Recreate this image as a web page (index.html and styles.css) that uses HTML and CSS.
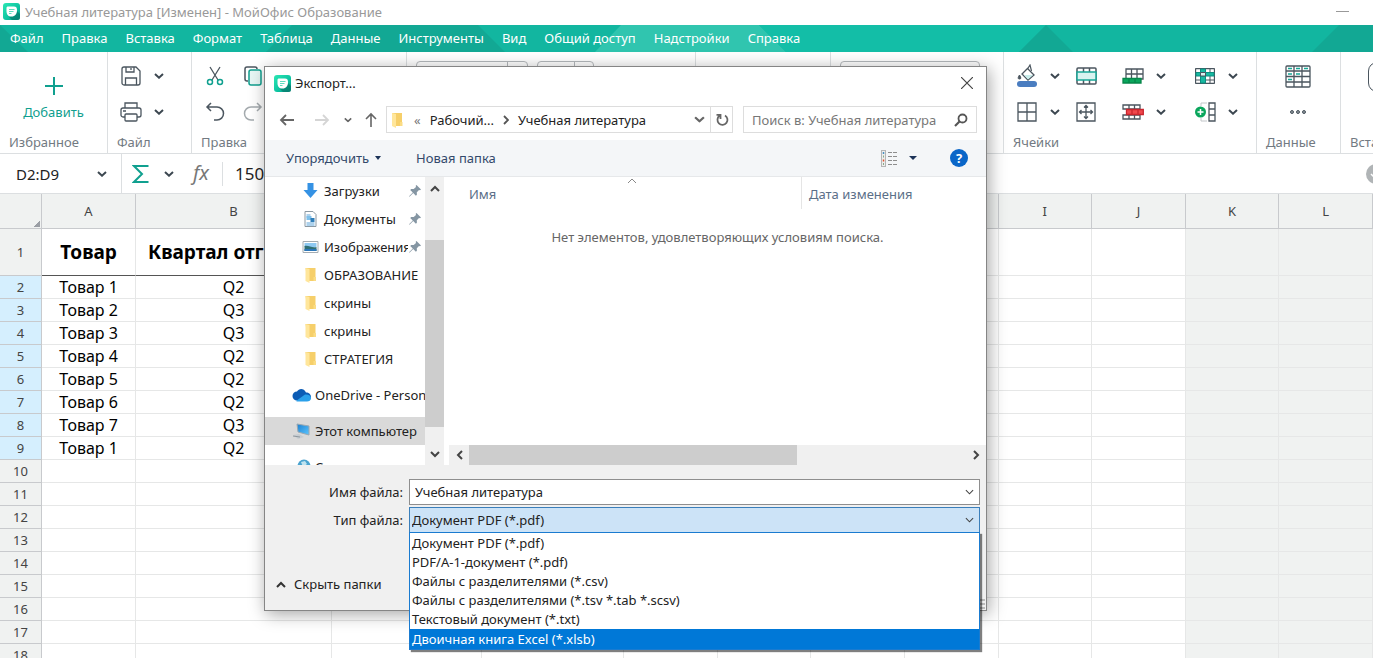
FILE: index.html
```html
<!DOCTYPE html>
<html lang="ru">
<head>
<meta charset="utf-8">
<title>Учебная литература [Изменен] - МойОфис Образование</title>
<link rel="stylesheet" href="styles.css">
</head>
<body>
<svg class="defs" width="0" height="0" aria-hidden="true">
  <defs>
    <linearGradient id="logo-fill" x1="0" y1="0" x2="1" y2="1">
      <stop offset="0" stop-color="#2be8b4"/><stop offset="0.6" stop-color="#0cc2a0"/><stop offset="1" stop-color="#0a8f80"/>
    </linearGradient>
    <linearGradient id="screen-fill" x1="0" y1="0" x2="1" y2="1">
      <stop offset="0" stop-color="#1c7fd0"/><stop offset="1" stop-color="#5cc6ff"/>
    </linearGradient>
  </defs>
  <symbol id="logo" viewBox="0 0 17 17">
    <rect width="17" height="17" rx="3" fill="url(#logo-fill)"/>
    <path d="M13 7l4 4v4a2 2 0 0 1-2 2H9l-3-3z" fill="#067a6c" opacity=".7"/>
    <path d="M3.500 5C3.500 4 4 3.500 5 3.500h6c2 0 3 1 3 3.500 0 4-2 6.500-5.500 6.500S3.500 11.500 3.500 8z" fill="#fff"/>
    <path d="M6 6.500h5.500M6 8.500h4.500M6 10.500h2.500" stroke="#5fdcbf" stroke-width="1"/>
  </symbol>
  <symbol id="chev" viewBox="0 0 10 6"><path d="M1 1l4 3.700L9 1" fill="none" stroke="currentColor" stroke-width="2"/></symbol>
  <symbol id="chev-thin" viewBox="0 0 10 6"><path d="M1 1l4 4 4-4" fill="none" stroke="currentColor" stroke-width="1.200"/></symbol>
  <symbol id="folder" viewBox="0 0 12 16">
    <path d="M1 1h10v13H3z" fill="#f6cf6a"/><path d="M1 1l4 1v14l-4-2z" fill="#ffe69b"/><path d="M9 10h2.500v4H9z" fill="#fbdc84"/>
  </symbol>
  <symbol id="pin" viewBox="0 0 12 12"><path d="M7.500 0 12 4.500l-1 .8-1-.2-2.200 2.200.1 2.400-1 1-2.700-2.700L.5 11.700l-.4-.4L3.800 7.600 1.200 5l1-1 2.500.1L7 1.900 6.700.8z" fill="#8596a3"/></symbol>
</svg>

<header class="titlebar">
  <svg class="logo"><use href="#logo"/></svg>
  <h1 class="title">Учебная литература [Изменен] - МойОфис Образование</h1>
  <button class="minimize" type="button" aria-label="Свернуть"></button>
</header>

<nav class="menubar">
  <svg class="pattern" viewBox="0 0 1373 27" preserveAspectRatio="none" aria-hidden="true">
    <path d="M0 0v27h28z" fill="#12a894"/>
    <path d="M292 0h186l27 27H266z" fill="#12a894"/>
    <path d="M621 0h138l27 27H595z" fill="#30c5af"/>
    <path d="M759 0h287l-27 27H786z" fill="#13bea7"/>
    <path d="M1046 0l27 27h-54z" fill="#12a894"/>
    <path d="M1339 0h34v27h-61z" fill="#12a894"/>
  </svg>
  <button type="button">Файл</button><button type="button">Правка</button><button type="button">Вставка</button><button type="button">Формат</button><button type="button">Таблица</button><button type="button">Данные</button><button type="button">Инструменты</button><button type="button">Вид</button><button type="button">Общий доступ</button><button type="button">Надстройки</button><button type="button">Справка</button>
</nav>

<section class="ribbon">
  <div class="group favorites">
    <button class="add" type="button">
      <svg width="20" height="20" viewBox="0 0 20 20"><path d="M10 1v18M1 10h18" stroke="#10a08f" stroke-width="2"/></svg>
      Добавить
    </button>
    <h2>Избранное</h2>
  </div>
  <div class="group file">
    <div class="tools">
      <div class="grid two">
        <button type="button" aria-label="Сохранить"><svg width="20" height="20" viewBox="0 0 20 20" fill="none" stroke="#4b565f" stroke-width="1.300"><path d="M1 3a2 2 0 0 1 2-2h12l4 4v12a2 2 0 0 1-2 2H3a2 2 0 0 1-2-2zM5 1v5h8V1M10 2v2M4.500 19v-7h11v7"/></svg></button>
        <button type="button" aria-label="Варианты сохранения"><svg class="chev"><use href="#chev"/></svg></button>
        <button type="button" aria-label="Печать"><svg width="22" height="20" viewBox="0 0 22 20" fill="none" stroke="#4b565f" stroke-width="1.300"><path d="M5 6V1h12v5M5 15H3a2 2 0 0 1-2-2V8a2 2 0 0 1 2-2h16a2 2 0 0 1 2 2v5a2 2 0 0 1-2 2h-2M3 9h3"/><rect x="5" y="12" width="12" height="7" rx="1"/></svg></button>
        <button type="button" aria-label="Варианты печати"><svg class="chev"><use href="#chev"/></svg></button>
      </div>
    </div>
    <h2>Файл</h2>
  </div>
  <div class="group edit">
    <div class="tools">
      <div class="grid spaced">
        <button type="button" aria-label="Вырезать"><svg width="18" height="20" viewBox="0 0 18 20" fill="none"><path d="M4 1l8 13M14 1 6 14" stroke="#4b565f" stroke-width="1.300"/><circle cx="4" cy="16" r="2.500" stroke="#10a08f" stroke-width="1.500"/><circle cx="14" cy="16" r="2.500" stroke="#10a08f" stroke-width="1.500"/></svg></button>
        <button type="button" aria-label="Копировать"><svg width="18" height="20" viewBox="0 0 18 20" fill="none" stroke-width="1.500"><path d="M4 15H3a2 2 0 0 1-2-2V3a2 2 0 0 1 2-2h8a2 2 0 0 1 2 2" stroke="#4b565f"/><rect x="5" y="4" width="12" height="15" rx="2" fill="#e8f7f5" stroke="#10a08f"/></svg></button>
        <button type="button" aria-label="Отменить"><svg width="20" height="20" viewBox="0 0 20 20" fill="none" stroke="#4b565f" stroke-width="1.500"><path d="M6 1 2 5l4 4M2 5h10a6.500 6.500 0 0 1 0 13H9"/></svg></button>
        <button type="button" aria-label="Повторить"><svg width="20" height="20" viewBox="0 0 20 20" fill="none" stroke="#a4aaae" stroke-width="1.500"><path d="M14 1l4 4-4 4M18 5H8a6.500 6.500 0 0 0 0 13h3"/></svg></button>
      </div>
    </div>
    <h2>Правка</h2>
  </div>
  <div class="group font"><span class="field wide"></span><span class="field small"></span></div>
  <div class="group align"></div>
  <div class="group number"><span class="field style"></span></div>
  <div class="group cells">
    <div class="tools">
      <div class="grid three">
        <button type="button" aria-label="Заливка"><svg width="22" height="24" viewBox="0 0 22 24" fill="none"><path d="M11.500 4.500 18 11l-6 5-6-6z" fill="#fff" stroke="#4b565f" stroke-width="1.300"/><path d="M8 11h9l-5 4.500z" fill="#c9eeec"/><path d="M11.500 5 14 1l1.500 6" stroke="#4b565f" stroke-width="1.200"/><path d="M3.500 11c-2 3-1.500 4 0 4s2-1 0-4z" fill="#4b565f" stroke="#4b565f"/><rect x="1" y="17" width="20" height="6" rx="3" fill="#4a7dc0"/></svg></button>
        <button type="button" aria-label="Цвет заливки"><svg class="chev"><use href="#chev"/></svg></button>
        <button type="button" aria-label="Объединить"><svg width="21" height="18" viewBox="0 0 21 18" fill="none" stroke="#4b565f" stroke-width="1.500"><rect x="1" y="1" width="19" height="16" rx="1"/><path d="M7.500 1v4M13.500 1v4M7.500 13v4M13.500 13v4"/><rect x="1" y="5" width="19" height="8" fill="#d9f3f0" stroke="#19a797"/></svg></button>
        <button type="button" aria-label="Границы"><svg width="20" height="20" viewBox="0 0 20 20" fill="none" stroke="#4b565f" stroke-width="1.300"><path d="M1 1h18v18H1zM10 1v18M1 10h18"/></svg></button>
        <button type="button" aria-label="Вид границ"><svg class="chev"><use href="#chev"/></svg></button>
        <button type="button" aria-label="Размер"><svg width="20" height="20" viewBox="0 0 20 20" fill="none" stroke="#4b565f" stroke-width="1.300"><path d="M1 1h18v18H1zM10 3.500v13M3.500 10h13M8 5.500l2-2 2 2M8 14.500l2 2 2-2M5.500 8l-2 2 2 2M14.500 8l2 2-2 2"/></svg></button>
      </div>
      <span class="sep"></span>
      <div class="grid two">
        <button type="button" aria-label="Вставить строки"><svg width="22" height="16" viewBox="0 0 22 16" fill="none" stroke="#4b565f" stroke-width="1.300"><path d="M4 1h17v10H4zM9.500 1v10M15 1v10M4 6h17"/><path d="M1 10.500h18V15H1zM7 10.500V15M13 10.500V15" fill="#0aa65c" stroke="#07864a"/></svg></button>
        <button type="button" aria-label="Варианты вставки строк"><svg class="chev"><use href="#chev"/></svg></button>
        <button type="button" aria-label="Удалить строки"><svg width="22" height="16" viewBox="0 0 22 16" fill="none" stroke="#4b565f" stroke-width="1.300"><path d="M1 1h17v4H1zM7 1v4M12.500 1v4M1 11h17v4H1zM7 11v4M12.500 11v4"/><path d="M4.500 5.500H21.300v5H4.500zM10 5.500v5M16 5.500v5" fill="#f0484c" stroke="#c9262f"/></svg></button>
        <button type="button" aria-label="Варианты удаления строк"><svg class="chev"><use href="#chev"/></svg></button>
      </div>
      <span class="sep"></span>
      <div class="grid two">
        <button type="button" aria-label="Закрепить"><svg width="20" height="16" viewBox="0 0 20 16" fill="none" stroke="#4b565f"><rect x=".5" y=".5" width="19" height="15" rx="1" stroke-width="1.300"/><path d="M15 1v14M1 12h18"/><path d="M5.500 1h5v14h-5zM1 4.500h18V8H1z" fill="#17b8a0" stroke="#0c8f80"/><path d="M5.500 4.500h5V8h-5z" fill="#d9f3f0" stroke="#4b565f"/></svg></button>
        <button type="button" aria-label="Варианты закрепления"><svg class="chev"><use href="#chev"/></svg></button>
        <button type="button" aria-label="Добавить столбец"><svg width="21" height="20" viewBox="0 0 21 20" fill="none"><path d="M6 4V1h6M6 16v3h6" stroke="#c2c6c9"/><path d="M14 1h6v18h-6zM14 7h6M14 13h6" stroke="#4b565f" stroke-width="1.300"/><circle cx="5.500" cy="10" r="5.500" fill="#0aa65c"/><path d="M5.500 7v6M2.500 10h6" stroke="#fff" stroke-width="1.500"/></svg></button>
        <button type="button" aria-label="Варианты столбца"><svg class="chev"><use href="#chev"/></svg></button>
      </div>
    </div>
    <h2>Ячейки</h2>
  </div>
  <div class="group data">
    <div class="tools">
      <div class="grid one">
        <button type="button" aria-label="Сводная таблица"><svg width="26" height="23" viewBox="0 0 26 23" fill="none" stroke="#4b565f" stroke-width="1.300"><rect x="1" y="1" width="24" height="21" rx="1"/><path d="M9 1v21M17 1v21M1 6h24M1 11.500h24M1 17h24"/><path d="M3 3.500h4M11 3.500h4M19 3.500h4M3 9h4M11 9h4M3 14.500h4" stroke="#17a896" stroke-width="1.500"/></svg></button>
        <button type="button" aria-label="Ещё"><svg width="18" height="6" viewBox="0 0 18 6" fill="#8d959b" stroke="#4b565f"><circle cx="3" cy="3" r="1.500"/><circle cx="9" cy="3" r="1.500"/><circle cx="15" cy="3" r="1.500"/></svg></button>
      </div>
    </div>
    <h2>Данные</h2>
  </div>
  <div class="group insert">
    <div class="tools"><button type="button" class="shape" aria-label="Фигура"></button></div>
    <h2>Вставка</h2>
  </div>
</section>

<section class="formula">
  <button class="range" type="button">D2:D9 <svg class="chev"><use href="#chev"/></svg></button>
  <button class="sum" type="button" aria-label="Сумма"><svg width="17" height="20" viewBox="0 0 17 20" fill="none" stroke="#10a08f" stroke-width="2"><path d="M16.500 2H2l8 8-8 8h14.500"/></svg><svg class="chev"><use href="#chev"/></svg></button>
  <span class="fx">fx</span>
  <input class="value" aria-label="Формула" value="150">
  <button class="accept" type="button" aria-label="Принять"><svg width="20" height="20" viewBox="0 0 20 20"><circle cx="10" cy="10" r="10" fill="#b0b4b6"/><path d="M5 10l3.500 3.500L15 7" stroke="#fff" stroke-width="1.500" fill="none"/></svg></button>
</section>

<main class="sheet">
  <table>
    <colgroup><col class="c-num"><col class="c-a"><col class="c-b"><col class="c-c"><col class="c-d"><col class="c-std"><col class="c-std"><col class="c-std"><col class="c-std"><col class="c-std"><col class="c-std"><col class="c-std"><col class="c-std"></colgroup>
    <thead>
      <tr><th class="corner"></th><th>A</th><th>B</th><th>C</th><th>D</th><th>E</th><th>F</th><th>G</th><th>H</th><th>I</th><th>J</th><th>K</th><th>L</th></tr>
    </thead>
    <tbody>
      <tr class="head"><th>1</th><td>Товар</td><td>Квартал отг</td><td></td><td></td><td></td><td></td><td></td><td></td><td></td><td></td><td></td><td></td></tr>
      <tr class="sel"><th>2</th><td>Товар 1</td><td>Q2</td><td></td><td></td><td></td><td></td><td></td><td></td><td></td><td></td><td></td><td></td></tr>
      <tr class="sel"><th>3</th><td>Товар 2</td><td>Q3</td><td></td><td></td><td></td><td></td><td></td><td></td><td></td><td></td><td></td><td></td></tr>
      <tr class="sel"><th>4</th><td>Товар 3</td><td>Q3</td><td></td><td></td><td></td><td></td><td></td><td></td><td></td><td></td><td></td><td></td></tr>
      <tr class="sel"><th>5</th><td>Товар 4</td><td>Q2</td><td></td><td></td><td></td><td></td><td></td><td></td><td></td><td></td><td></td><td></td></tr>
      <tr class="sel"><th>6</th><td>Товар 5</td><td>Q2</td><td></td><td></td><td></td><td></td><td></td><td></td><td></td><td></td><td></td><td></td></tr>
      <tr class="sel"><th>7</th><td>Товар 6</td><td>Q2</td><td></td><td></td><td></td><td></td><td></td><td></td><td></td><td></td><td></td><td></td></tr>
      <tr class="sel"><th>8</th><td>Товар 7</td><td>Q3</td><td></td><td></td><td></td><td></td><td></td><td></td><td></td><td></td><td></td><td></td></tr>
      <tr class="sel"><th>9</th><td>Товар 1</td><td>Q2</td><td></td><td></td><td></td><td></td><td></td><td></td><td></td><td></td><td></td><td></td></tr>
      <tr><th>10</th><td></td><td></td><td></td><td></td><td></td><td></td><td></td><td></td><td></td><td></td><td></td><td></td></tr>
      <tr><th>11</th><td></td><td></td><td></td><td></td><td></td><td></td><td></td><td></td><td></td><td></td><td></td><td></td></tr>
      <tr><th>12</th><td></td><td></td><td></td><td></td><td></td><td></td><td></td><td></td><td></td><td></td><td></td><td></td></tr>
      <tr><th>13</th><td></td><td></td><td></td><td></td><td></td><td></td><td></td><td></td><td></td><td></td><td></td><td></td></tr>
      <tr><th>14</th><td></td><td></td><td></td><td></td><td></td><td></td><td></td><td></td><td></td><td></td><td></td><td></td></tr>
      <tr><th>15</th><td></td><td></td><td></td><td></td><td></td><td></td><td></td><td></td><td></td><td></td><td></td><td></td></tr>
      <tr><th>16</th><td></td><td></td><td></td><td></td><td></td><td></td><td></td><td></td><td></td><td></td><td></td><td></td></tr>
      <tr><th>17</th><td></td><td></td><td></td><td></td><td></td><td></td><td></td><td></td><td></td><td></td><td></td><td></td></tr>
      <tr><th>18</th><td></td><td></td><td></td><td></td><td></td><td></td><td></td><td></td><td></td><td></td><td></td><td></td></tr>
    </tbody>
  </table>
</main>

<div class="dialog" role="dialog" aria-labelledby="dialog-title">
  <div class="dialog-head">
    <svg class="logo"><use href="#logo"/></svg>
    <h2 id="dialog-title">Экспорт...</h2>
    <button type="button" aria-label="Закрыть"><svg width="12" height="12" viewBox="0 0 12 12"><path d="M0 0l12 12M12 0 0 12" stroke="#444" stroke-width="1.200"/></svg></button>
  </div>

  <div class="path-row">
    <button class="back" type="button" aria-label="Назад"><svg width="16" height="12" viewBox="0 0 16 12" fill="none" stroke="#666" stroke-width="1.800"><path d="M15 6H2M7 1 2 6l5 5"/></svg></button>
    <button class="forward" type="button" aria-label="Вперёд"><svg width="16" height="12" viewBox="0 0 16 12" fill="none" stroke="#d5d5d5" stroke-width="1.800"><path d="M1 6h13M9 1l5 5-5 5"/></svg></button>
    <button class="recent" type="button" aria-label="Последние"><svg width="8" height="6" viewBox="0 0 10 6" color="#666"><use href="#chev"/></svg></button>
    <button class="up" type="button" aria-label="Вверх"><svg width="12" height="16" viewBox="0 0 12 16" fill="none" stroke="#666" stroke-width="1.600"><path d="M6 15V2M1 7l5-5 5 5"/></svg></button>
    <div class="path">
      <svg class="folder"><use href="#folder"/></svg>
      <span class="dots">«</span>
      <span class="crumb">Рабочий...</span>
      <svg class="next" width="6" height="10" viewBox="0 0 6 10"><path d="M1 1l4 4-4 4" fill="none" stroke="#555" stroke-width="1.800"/></svg>
      <span class="crumb">Учебная литература</span>
      <button class="history" type="button" aria-label="История"><svg width="11" height="7" viewBox="0 0 10 6" color="#666"><use href="#chev"/></svg></button>
      <button class="refresh" type="button" aria-label="Обновить"><svg width="14" height="14" viewBox="0 0 14 14" fill="none" stroke="#666" stroke-width="1.800"><path d="M10 2.500a5 5 0 1 1-5.500.3M1.500 1.800h4V6"/></svg></button>
    </div>
    <label class="search"><input type="search" placeholder="Поиск в: Учебная литература" aria-label="Поиск"><svg width="14" height="14" viewBox="0 0 14 14" fill="none" stroke="#555"><circle cx="8.500" cy="5.500" r="4" stroke-width="1.800"/><path d="M5.500 8.500 1 13" stroke-width="2.200"/></svg></label>
  </div>

  <div class="commands">
    <button class="arrange" type="button">Упорядочить <i class="caret"></i></button>
    <button type="button">Новая папка</button>
    <button class="view" type="button" aria-label="Вид"><svg width="17" height="17" viewBox="0 0 17 17" fill="none"><rect x=".5" y=".5" width="4" height="16" fill="#eee" stroke="#b5b5b5"/><path d="M2.500 2v2" stroke="#4a90c0" stroke-width="1.500"/><path d="M2.500 5.500v2M2.500 13v2" stroke="#8a8"/><path d="M2.500 9.500v2" stroke="#e2502c" stroke-width="1.500"/><path d="M7 2.500h10M7 6.500h10M7 10.500h10M7 14.500h10" stroke="#8d8d8d" stroke-dasharray="4 1"/></svg><i class="caret"></i></button>
    <button class="help" type="button" aria-label="Справка">?</button>
  </div>

  <div class="browser">
    <ul class="places">
      <li><svg class="ico" viewBox="0 0 16 16"><path d="M5 0h6v7h4l-7 8-7-8h4z" fill="#3592e4"/></svg><span>Загрузки</span><svg class="pin"><use href="#pin"/></svg></li>
      <li><svg class="ico" viewBox="0 0 16 16"><path d="M2.500.5h8l3 3v12h-11z" fill="#fff" stroke="#8b98a2"/><path d="M4 4h4M4 6h3M4 12h8M4 14h8" stroke="#5ba3d9"/><path d="M4 5h5v4H4z" fill="#7fc0ea"/><path d="M8 7h4v4H8z" fill="#2f7db8"/></svg><span>Документы</span><svg class="pin"><use href="#pin"/></svg></li>
      <li><svg class="ico" viewBox="0 0 16 16"><path d="M.5 2.500h15v11H.5z" fill="#fff" stroke="#a4acb2"/><path d="M2 4h12v4H2z" fill="#8ec9f2"/><path d="M2 7c4-1 7 2 12 1v4H2z" fill="#2f6f74"/><path d="M2 10h12v2H2z" fill="#2a76b9"/></svg><span class="cut">Изображения</span><svg class="pin"><use href="#pin"/></svg></li>
      <li><svg class="ico"><use href="#folder"/></svg><span>ОБРАЗОВАНИЕ</span></li>
      <li><svg class="ico"><use href="#folder"/></svg><span>скрины</span></li>
      <li><svg class="ico"><use href="#folder"/></svg><span>скрины</span></li>
      <li><svg class="ico"><use href="#folder"/></svg><span>СТРАТЕГИЯ</span></li>
      <li class="root"><svg class="ico cloud" viewBox="0 0 19 13"><path d="M5 12a4.500 4.500 0 0 1 0-9c2-3.500 7-3.500 9 1 3 0 5 2 5 4.500S17 12 15 12z" fill="#0b5cb5"/><path d="M4 12.500 13 6c3-.5 6 1 6 3.500S17 13 15 13H5z" fill="#2aa0ea"/></svg><span>OneDrive - Personal</span></li>
      <li class="root current"><svg class="ico cloud" viewBox="0 0 19 16"><path d="M5 1l12 2v9L6 9z" fill="url(#screen-fill)" stroke="#9aa8b2"/><path d="M1 12l6-1 5 3-6 2z" fill="#c6ccd1"/><path d="M1 13l7 1" stroke="#8d979e"/></svg><span>Этот компьютер</span></li>
      <li class="root"><svg class="ico cloud" viewBox="0 0 19 16"><circle cx="12" cy="7" r="6.500" fill="#4aa3cf"/><path d="M9 3l4-1 2 3-4 3z" fill="#bfe3ef"/><path d="M1 9h7v5H1z" fill="#3a8fbd"/></svg><span>Сеть</span></li>
    </ul>
    <div class="vbar">
      <button type="button" aria-label="Вверх"><svg width="10" height="7" viewBox="0 0 10 7"><path d="M1 6l4-4 4 4" fill="none" stroke="#444" stroke-width="2"/></svg></button>
      <span class="thumb"></span>
      <button type="button" aria-label="Вниз"><svg width="10" height="7" viewBox="0 0 10 7"><path d="M1 1l4 4 4-4" fill="none" stroke="#444" stroke-width="2"/></svg></button>
    </div>
    <div class="files">
      <div class="files-head"><span class="name">Имя</span><svg class="sort" width="10" height="6" viewBox="0 0 10 6"><path d="M1 5l4-4 4 4" fill="none" stroke="#888"/></svg><span class="date">Дата изменения</span></div>
      <p class="empty">Нет элементов, удовлетворяющих условиям поиска.</p>
      <div class="hbar">
        <button type="button" aria-label="Влево"><svg width="7" height="10" viewBox="0 0 7 10"><path d="M6 1 2 5l4 4" fill="none" stroke="#444" stroke-width="2"/></svg></button>
        <span class="thumb"></span>
        <button type="button" aria-label="Вправо"><svg width="7" height="10" viewBox="0 0 7 10"><path d="M1 1l4 4-4 4" fill="none" stroke="#444" stroke-width="2"/></svg></button>
      </div>
    </div>
  </div>

  <form class="save">
    <label for="file-name">Имя файла:</label>
    <div class="combo"><input id="file-name" value="Учебная литература"><svg class="arrow"><use href="#chev-thin"/></svg></div>
    <label for="file-type">Тип файла:</label>
    <div class="combo type">
      <select id="file-type"><option>Документ PDF (*.pdf)</option></select><svg class="arrow"><use href="#chev-thin"/></svg>
      <ul class="options" role="listbox" aria-label="Тип файла">
        <li role="option">Документ PDF (*.pdf)</li>
        <li role="option">PDF/A-1-документ (*.pdf)</li>
        <li role="option">Файлы с разделителями (*.csv)</li>
        <li role="option">Файлы с разделителями (*.tsv *.tab *.scsv)</li>
        <li role="option">Текстовый документ (*.txt)</li>
        <li role="option" class="active" aria-selected="true">Двоичная книга Excel (*.xlsb)</li>
      </ul>
    </div>
  </form>
  <button class="hide" type="button"><svg width="10" height="7" viewBox="0 0 10 7"><path d="M1 6l4-4 4 4" fill="none" stroke="#333" stroke-width="2"/></svg>Скрыть папки</button>
  <span class="grip"></span>
</div>
</body>
</html>
```
FILE: styles.css
```css
* { box-sizing: border-box; }

body {
  margin: 0;
  height: 100vh;
  overflow: hidden;
  position: relative;
  display: flex;
  flex-direction: column;
  background: #fff;
  color: #222;
  font: 13px/18px "Noto Sans", "Open Sans", sans-serif;
}

button, input, select { font: inherit; color: inherit; }
button { border: 0; padding: 0; background: none; display: flex; align-items: center; justify-content: center; }
input { outline: 0; }
h1, h2, p, ul { margin: 0; padding: 0; font-size: inherit; font-weight: 400; }
ul { list-style: none; }
svg { display: block; flex: none; }
.defs { position: absolute; }
.logo { width: 17px; height: 17px; }
.chev { width: 10px; height: 6px; color: #3c4750; }

.titlebar { flex: none; height: 25px; padding: 0 24px 2px 3px; display: flex; align-items: center; gap: 5px; }
.title { flex: 1; color: #999; }
.minimize { width: 13px; height: 1px; background: #999; }

.menubar {
  flex: none;
  position: relative;
  height: 27px;
  padding: 0 0 2px 10px;
  display: flex;
  align-items: center;
  gap: 18px;
  background: #12b6a0;
  color: #fff;
}
.menubar button { position: relative; }
.pattern { position: absolute; inset: 0; width: 100%; height: 100%; }

.ribbon { flex: none; height: 102px; display: flex; overflow: hidden; border-bottom: 1px solid #dcdfe1; }
.group { flex: none; padding: 6px 9px 0; border-right: 1px solid #dcdfe1; }
.group h2 { padding-top: 3px; color: #727a82; }
.favorites { width: 108px; }
.file { width: 84px; }
.edit { width: 215px; }
.font { width: 289px; display: flex; gap: 9px; }
.align { width: 135px; }
.number { width: 173px; }
.cells { width: 253px; }
.data { width: 84px; }
.insert { width: 100px; border-right: 0; }
.add { width: 100%; height: 72px; flex-direction: column; gap: 7px; padding-top: 8px; color: #10a08f; }
.tools { height: 72px; display: flex; align-items: center; }
.grid { display: grid; grid-auto-rows: 36px; grid-template-columns: 28px 28px; }
.grid.spaced { column-gap: 10px; }
.grid.three { grid-template-columns: 28px 28px 34px; }
.grid.one { grid-template-columns: 64px; }
.sep { width: 1px; height: 56px; margin: 0 9px 0 7px; background: #dcdfe1; }
.field { height: 26px; margin-top: 3px; border: 1px solid #b5b9bc; border-radius: 4px; }
.field.wide { width: 112px; background: linear-gradient(#b5b9bc, #b5b9bc) 90px 0 / 1px 100% no-repeat; }
.field.small { width: 57px; background: linear-gradient(#b5b9bc, #b5b9bc) 36px 0 / 1px 100% no-repeat; }
.field.style { display: block; width: 140px; }
.shape { width: 40px; height: 30px; margin-left: 18px; margin-bottom: 34px; border: 1px solid #4b565f; border-radius: 9px; }

.formula { flex: none; height: 40px; display: flex; align-items: center; border-bottom: 1px solid #dcdfe1; font-size: 15px; }
.range { width: 122px; height: 100%; padding: 0 14px 0 16px; justify-content: space-between; border-right: 1px solid #dcdfe1; }
.sum { width: 62px; gap: 15px; }
.fx { width: 39px; height: 24px; padding-left: 9px; border-right: 1px solid #dcdfe1; font: italic 20px/22px "Noto Sans", sans-serif; color: #777; }
.value { flex: 1; min-width: 0; border: 0; padding: 0 12px; font-size: 17px; }
.accept { margin-right: -13px; }

.sheet { flex: 1; min-height: 0; overflow: hidden; }
table { width: 100%; min-width: 1200px; table-layout: fixed; border-collapse: separate; border-spacing: 0; }
.c-num { width: 42px; }
.c-a { width: 94px; }
.c-b { width: 196px; }
.c-c { width: 150px; }
.c-d { width: 142px; }
th, td { height: 23px; padding: 0; text-align: center; white-space: nowrap; overflow: hidden; }
th { background: #f0f2f1; border-right: 1px solid #c8cacd; border-bottom: 1px solid #c8cacd; color: #444; font-weight: 400; line-height: 20px; }
td { border-right: 1px solid #e6e7e7; border-bottom: 1px solid #e6e7e7; color: #000; font-size: 16px; line-height: 22px; }
thead th { height: 35px; }
.corner { background: linear-gradient(135deg, transparent 50%, #9b9fa5 50%) right 1px bottom 1px / 7px 7px no-repeat, #f0f2f1; }
.head th, .head td { height: 47px; }
.head td { font-weight: 700; font-size: 19px; }
.head td:nth-child(-n+6) { border-bottom-color: #555; }
.head td:nth-child(3) { text-align: left; padding-left: 12px; }
.sel th { background: #d5effe; }
td:nth-child(n+12) { background: #f0f2f1; }

.dialog {
  position: absolute;
  left: 264px;
  top: 66px;
  width: 723px;
  height: 545px;
  display: flex;
  flex-direction: column;
  border: 1px solid #858585;
  background: #f0f0f0;
  box-shadow: 2px 3px 16px rgba(0, 0, 0, .36);
}
.dialog-head { flex: none; height: 34px; padding: 0 13px 2px 9px; display: flex; align-items: center; gap: 4px; background: #fff; }
.dialog-head h2 { flex: 1; }
.path-row { flex: none; height: 39px; padding: 5px 9px 7px 14px; display: flex; align-items: center; background: #fff; }
.back { width: 16px; }
.forward { width: 16px; margin-left: 19px; }
.recent { width: 8px; margin-left: 14px; }
.up { width: 12px; margin: 0 9px 0 13px; }
.path { flex: 1; height: 27px; display: flex; align-items: center; border: 1px solid #ddd; }
.folder { width: 12px; height: 16px; margin-left: 4px; }
.dots { margin: 0 9px 0 11px; color: #777; }
.next { margin: 0 9px; }
.history { height: 100%; margin-left: auto; padding-right: 5px; border-right: 1px solid #ddd; }
.refresh { width: 21px; height: 100%; }
.search { width: 234px; height: 27px; margin-left: 10px; padding: 0 8px; display: flex; align-items: center; border: 1px solid #ddd; }
.search input { flex: 1; min-width: 0; border: 0; padding: 0; background: none; }
.search input::placeholder { color: #777; opacity: 1; }
.commands { flex: none; height: 37px; padding: 0 18px 0 21px; display: flex; align-items: center; background: #f4f6f8; border-bottom: 1px solid #e6e8ea; color: #33496b; }
.arrange { margin-right: 35px; gap: 6px; }
.caret { border: 4px solid transparent; border-top-color: #1c3358; border-bottom: 0; }
.arrange .caret { border-width: 4px 3px 0; }
.view { margin-left: auto; gap: 11px; }
.help { width: 18px; height: 18px; margin-left: 33px; border-radius: 50%; background: #0a66c8; color: #fff; font-weight: 700; }

.browser { flex: none; height: 288px; display: flex; background: #fff; }
.places { width: 160px; overflow: hidden; }
.places li { height: 28px; padding-left: 37px; display: flex; align-items: center; gap: 5px; white-space: nowrap; }
.places .ico { width: 17px; height: 16px; }
.places .pin { width: 12px; height: 12px; margin: 0 4px 0 auto; }
.places .cut { flex: none; width: 84px; overflow: hidden; }
.places .cut + .pin { margin-left: -4px; }
.places .root { margin-top: 8px; padding-left: 27px; gap: 4px; }
.places .cloud { width: 19px; }
.places .current { background: #d9d9d9; }
.vbar { width: 19px; display: flex; flex-direction: column; background: #f0f0f0; }
.vbar button { height: 22px; }
.vbar .thumb { height: 187px; margin: 41px 0 auto; background: #cdcdcd; }
.files { flex: 1; min-width: 0; margin-left: 5px; display: flex; flex-direction: column; }
.files-head { height: 32px; display: grid; grid-template-columns: 178px 10px 164px 1fr; color: #5b6f88; line-height: 34px; }
.files-head .name { padding-left: 20px; }
.files-head .date { grid-column: 4; height: 32px; padding-left: 7px; border-left: 1px solid #e5e5e5; }
.sort { margin-top: 1px; }
.empty { margin-top: 19px; text-align: center; color: #666; }
.hbar { height: 20px; margin-top: auto; display: flex; background: #f0f0f0; }
.hbar button { width: 20px; }
.hbar .thumb { width: 328px; margin-right: auto; background: #cdcdcd; }

.save { padding: 14px 6px 0 0; display: grid; grid-template-columns: 138px 1fr; column-gap: 6px; row-gap: 2px; align-items: center; }
.save label { text-align: right; }
.combo { position: relative; height: 26px; }
.combo input, .combo select { appearance: none; width: 100%; height: 26px; padding: 0 5px; border: 1px solid #8e8e8e; border-radius: 0; background: #fff; }
.combo select { padding: 0 2px; border-color: #3a7fbb; background: #cce3f7; }
.arrow { position: absolute; right: 6px; top: 10px; width: 9px; height: 6px; color: #444; }
.options {
  position: absolute;
  z-index: 1;
  left: 0;
  right: 0;
  top: 25px;
  padding-top: 1px;
  border: 1px solid #1a7bd0;
  background: #fff;
  box-shadow: 2px 2px 1px rgba(0, 0, 0, .5);
}
.options li { padding: 0 2px; line-height: 19px; }
.options .active { line-height: 20px; background: #0078d7; color: #fff; }
.hide { gap: 8px; margin: auto auto 17px 11px; }
.grip { position: absolute; right: 1px; bottom: 1px; width: 8px; height: 10px; background: repeating-linear-gradient(#bbb 0 2px, transparent 2px 4px); }
```
